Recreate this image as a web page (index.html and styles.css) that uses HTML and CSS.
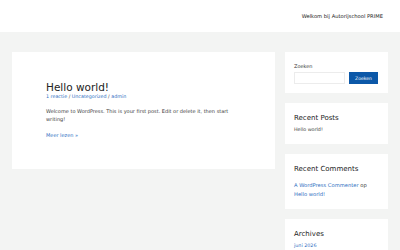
FILE: index.html
```html
<!DOCTYPE html>
<html lang="nl">
<head>
    <meta charset="UTF-8">
    <meta name="viewport" content="width=device-width, initial-scale=1.0">
    <title>Autorijschool PRIME</title>
    <link rel="stylesheet" href="styles.css">
</head>
<body>
    <header class="site-header">
        <nav class="menu">Welkom bij Autorijschool PRIME</nav>
    </header>
    <div class="site-content">
        <main class="main">
            <article class="post">
                <h2 class="post-title">Hello world!</h2>
                <div class="post-meta">
                    <a href="#">1 reactie</a> / <a href="#">Uncategorized</a> / <a href="#">admin</a>
                </div>
                <p class="post-excerpt">Welcome to WordPress. This is your first post. Edit or delete it, then start writing!</p>
                <p class="read-more"><a href="#">Meer lezen »</a></p>
            </article>
        </main>
        <aside class="sidebar">
            <section class="widget widget-search">
                <label class="search-label" for="s">Zoeken</label>
                <div class="search-row">
                    <input type="text" id="s" class="search-input">
                    <button class="search-button">Zoeken</button>
                </div>
            </section>
            <section class="widget">
                <h3 class="widget-title">Recent Posts</h3>
                <ul class="widget-list">
                    <li><a href="#" class="plain">Hello world!</a></li>
                </ul>
            </section>
            <section class="widget">
                <h3 class="widget-title">Recent Comments</h3>
                <ul class="widget-list comments">
                    <li><a href="#">A WordPress Commenter</a> op <a href="#">Hello world!</a></li>
                </ul>
            </section>
            <section class="widget">
                <h3 class="widget-title">Archives</h3>
                <ul class="widget-list">
                    <li><a href="#">juni 2026</a></li>
                </ul>
            </section>
        </aside>
    </div>
</body>
</html>
```
FILE: styles.css
```css
body {
    margin: 0;
    font-family: 'DejaVu Sans', 'Noto Sans', sans-serif;
    color: #3a3a3a;
    background-color: #f3f4f3;
    height: 250px;
    overflow: hidden;
}
a {
    color: #2f6fbf;
    text-decoration: none;
}
.site-header {
    height: 32px;
    background-color: #ffffff;
    display: flex;
    justify-content: flex-end;
    align-items: center;
    padding-right: 17px;
}
.menu {
    font-size: 5.2px;
    color: #222;
}
.site-content {
    display: flex;
    gap: 10px;
    padding: 20px 12px 0 12px;
    align-items: flex-start;
}
.main {
    width: 263px;
}
.post {
    background-color: #ffffff;
    height: 117px;
    padding: 0 34px;
    box-sizing: border-box;
    padding-top: 29px;
}
.post-title {
    margin: 0;
    font-size: 10.5px;
    font-weight: normal;
    color: #222;
    line-height: 12px;
}
.post-meta {
    font-size: 4.8px;
    margin-top: 0;
    line-height: 7px;
}
.post-excerpt {
    font-size: 5px;
    line-height: 8px;
    margin: 7px 0 0 0;
}
.read-more {
    font-size: 5px;
    line-height: 8px;
    margin: 8px 0 0 0;
}
.sidebar {
    width: 103px;
    display: flex;
    flex-direction: column;
    gap: 10px;
}
.widget {
    background-color: #ffffff;
    padding: 11px 9px 10px 9px;
}
.widget-search {
    height: 41px;
    box-sizing: border-box;
}
.search-label {
    display: block;
    font-size: 5px;
    line-height: 6px;
    margin-bottom: 3px;
}
.search-row {
    display: flex;
    gap: 4px;
}
.search-input {
    width: 51px;
    height: 12px;
    box-sizing: border-box;
    border: 1px solid #ececec;
    padding: 0;
    margin: 0;
}
.search-button {
    width: 29px;
    height: 12px;
    border: none;
    padding: 0;
    margin: 0;
    background-color: #0c58a8;
    color: #ffffff;
    font-family: inherit;
    font-size: 4.6px;
}
.widget-title {
    margin: 0;
    font-size: 7px;
    line-height: 9px;
    font-weight: 500;
    color: #222;
}
.widget-list {
    list-style: none;
    margin: 2px 0 0 0;
    padding: 0;
    font-size: 4.8px;
    line-height: 9px;
}
.widget-list.comments {
    margin-top: 7px;
    font-size: 5.2px;
}
.plain {
    color: #3a3a3a;
}
```
